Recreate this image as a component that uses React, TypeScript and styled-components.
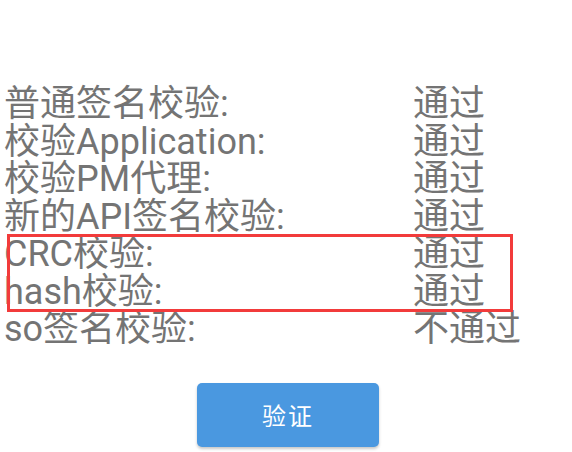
import React from "react";
import styled, { createGlobalStyle } from "styled-components";

const Global = createGlobalStyle`
  html, body { margin: 0; padding: 0; background: #ffffff; }
  body { width: 572px; height: 452px; overflow: hidden; }
`;

const Screen = styled.div`
  position: relative;
  width: 572px;
  height: 452px;
  background: #ffffff;
  font-family: Roboto, "Noto Sans CJK SC", sans-serif;
  display: flex;
  flex-direction: column;
  padding-top: 86px;
  box-sizing: border-box;
`;

const Table = styled.div`
  display: grid;
  grid-template-columns: 409px auto;
  padding-left: 4px;
`;

const Cell = styled.div`
  font-size: 36px;
  line-height: 37.5px;
  height: 37.5px;
  color: #747474;
  white-space: nowrap;
`;

const Highlight = styled.div`
  position: absolute;
  left: 7px;
  top: 234px;
  width: 506px;
  height: 78px;
  border: 3px solid #f23b3b;
  box-sizing: border-box;
  pointer-events: none;
`;

const Actions = styled.div`
  display: flex;
  justify-content: center;
  padding-top: 34px;
  padding-left: 4px;
`;

const Button = styled.button`
  width: 182px;
  height: 64px;
  border: none;
  border-radius: 5px;
  background: #4a98e0;
  color: #ffffff;
  font-family: Roboto, "Noto Sans CJK SC", sans-serif;
  font-size: 24px;
  letter-spacing: 2px;
  box-shadow: 0 2px 3px rgba(0, 0, 0, 0.22);
  cursor: pointer;
`;

const rows: [string, string][] = [
  ["普通签名校验:", "通过"],
  ["校验Application:", "通过"],
  ["校验PM代理:", "通过"],
  ["新的API签名校验:", "通过"],
  ["CRC校验:", "通过"],
  ["hash校验:", "通过"],
  ["so签名校验:", "不通过"],
];

export default function App() {
  return (
    <>
      <Global />
      <Screen>
        <Table>
          {rows.map(([label, value]) => (
            <React.Fragment key={label}>
              <Cell>{label}</Cell>
              <Cell>{value}</Cell>
            </React.Fragment>
          ))}
        </Table>
        <Actions>
          <Button>验证</Button>
        </Actions>
        <Highlight />
      </Screen>
    </>
  );
}
